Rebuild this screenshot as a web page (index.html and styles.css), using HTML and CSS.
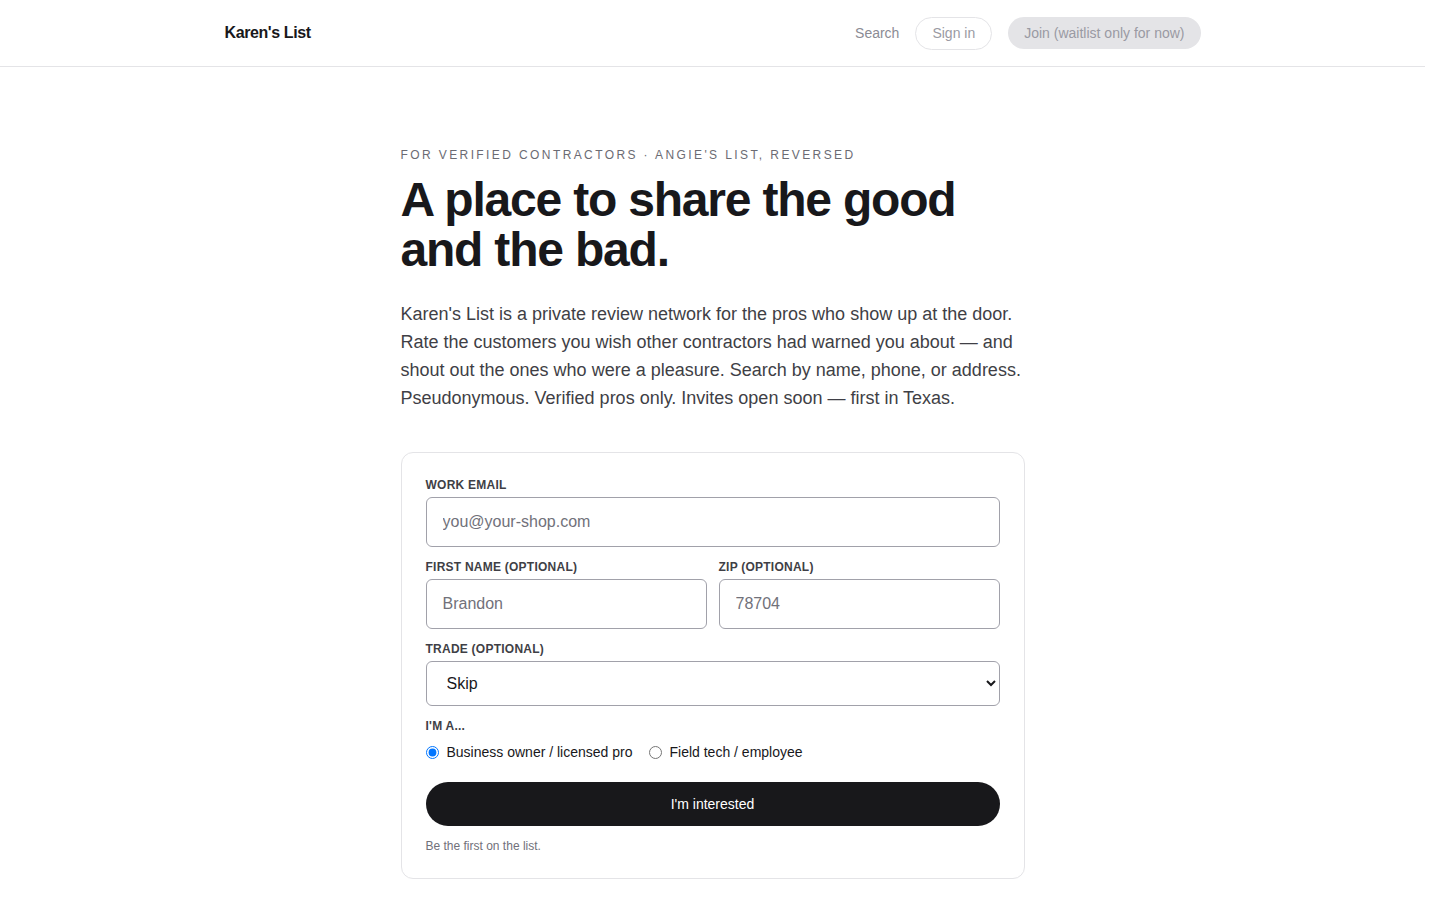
FILE: index.html
```html
<!DOCTYPE html>
<html>
<head>
    <meta name="viewport" content="width=device-width, initial-scale=1.0">
    <title>Karen's List</title>
    <link rel="stylesheet" href="styles.css">
</head>

<body>
    <header class="site-header">
        <div class="header-inner">
            <a class="brand" href="#">Karen's List</a>
            <nav class="nav">
                <a class="nav-link" href="#">Search</a>
                <a class="btn-outline" href="#">Sign in</a>
                <span class="btn-muted">Join (waitlist only for now)</span>
            </nav>
        </div>
    </header>

    <main class="hero">
        <p class="eyebrow">For verified contractors · Angie's List, reversed</p>
        <h1>A place to share the good and the bad.</h1>
        <p class="lede">
            Karen's List is a private review network for the pros who show up at the door.
            Rate the customers you wish other contractors had warned you about — and
            shout out the ones who were a pleasure. Search by name, phone, or address.
            Pseudonymous. Verified pros only. Invites open soon — first in Texas.
        </p>

        <form class="card" onsubmit="return false;">
            <label class="field-label" for="email">Work email</label>
            <input class="field" id="email" type="email" placeholder="you@your-shop.com">

            <div class="row">
                <div class="col">
                    <label class="field-label" for="fname">First name (optional)</label>
                    <input class="field" id="fname" type="text" placeholder="Brandon">
                </div>
                <div class="col">
                    <label class="field-label" for="zip">Zip (optional)</label>
                    <input class="field" id="zip" type="text" placeholder="78704">
                </div>
            </div>

            <label class="field-label" for="trade">Trade (optional)</label>
            <select class="select" id="trade">
                <option>Skip</option>
                <option>Plumbing</option>
                <option>Electrical</option>
                <option>HVAC</option>
                <option>Roofing</option>
            </select>

            <p class="field-label">I'm a...</p>
            <div class="radios">
                <label class="radio"><input type="radio" name="role" checked> Business owner / licensed pro</label>
                <label class="radio"><input type="radio" name="role"> Field tech / employee</label>
            </div>

            <button class="submit" type="submit">I'm interested</button>
            <p class="note">Be the first on the list.</p>
        </form>
    </main>

    <footer class="site-footer">
        <div class="footer-inner">
            <span>© Karen's List</span>
            <span>Built in Austin, TX</span>
        </div>
    </footer>
</body>

</html>
```

FILE: styles.css
```css
html, body {
    margin: 0;
    padding: 0;
    background: #ffffff;
    color: #18181b;
    font-family: "Liberation Sans", Arial, sans-serif;
}

body {
    padding-right: 15px;
}

a {
    text-decoration: none;
}

.site-header {
    border-bottom: 1px solid #e4e4e7;
}

.header-inner {
    max-width: 1024px;
    margin: 0 auto;
    padding: 0 24px;
    height: 66px;
    box-sizing: border-box;
    display: flex;
    align-items: center;
    justify-content: space-between;
}

.brand {
    font-size: 16px;
    font-weight: 700;
    color: #18181b;
    letter-spacing: -0.4px;
}

.nav {
    display: flex;
    align-items: center;
    gap: 16px;
    font-size: 14px;
}

.nav-link {
    color: #8b8b94;
}

.btn-outline {
    color: #9a9aa3;
    border: 1px solid #e4e4e7;
    border-radius: 999px;
    height: 33px;
    padding: 0 16px;
    display: flex;
    align-items: center;
    box-sizing: border-box;
}

.btn-muted {
    color: #9a9aa3;
    background: #e4e4e7;
    border-radius: 999px;
    height: 32px;
    padding: 0 16px;
    display: flex;
    align-items: center;
}

.hero {
    max-width: 624px;
    margin: 0 auto;
    padding: 80px 0 120px;
}

.eyebrow {
    margin: 0;
    font-size: 12px;
    line-height: 16px;
    letter-spacing: 0.2em;
    text-transform: uppercase;
    color: #6b6b73;
}

h1 {
    margin: 12px 0 0;
    font-size: 48px;
    line-height: 50px;
    font-weight: 700;
    letter-spacing: -0.025em;
    color: #18181b;
}

.lede {
    margin: 25px 0 0;
    font-size: 18px;
    line-height: 28px;
    color: #3f3f46;
}

.card {
    margin-top: 40px;
    border: 1px solid #e4e4e7;
    border-radius: 12px;
    padding: 24px;
    display: flex;
    flex-direction: column;
}

.field-label {
    display: block;
    margin: 0 0 4px;
    font-size: 12px;
    line-height: 16px;
    font-weight: 700;
    letter-spacing: 0.02em;
    text-transform: uppercase;
    color: #3f3f46;
}

.field {
    width: 100%;
    box-sizing: border-box;
    height: 50px;
    padding: 0 16px;
    font-family: inherit;
    font-size: 16px;
    color: #18181b;
    border: 1px solid #a1a1aa;
    border-radius: 6px;
    margin-bottom: 12px;
}

.field::placeholder {
    color: #71717a;
}

.row {
    display: flex;
    gap: 12px;
}

.col {
    flex: 1;
}

.select {
    width: 100%;
    height: 45px;
    box-sizing: border-box;
    padding: 0 16px;
    font-family: inherit;
    font-size: 16px;
    color: #18181b;
    background: #ffffff;
    border: 1px solid #a1a1aa;
    border-radius: 6px;
    margin-bottom: 12px;
}

.radios {
    display: flex;
    gap: 16px;
    margin-top: 6px;
    font-size: 14px;
    color: #18181b;
}

.radio {
    display: flex;
    align-items: center;
    gap: 4px;
}

.radio input {
    margin: 0 4px 0 0;
}

.submit {
    margin-top: 22px;
    height: 44px;
    border: 0;
    border-radius: 999px;
    background: #18181b;
    color: #ffffff;
    font-family: inherit;
    font-size: 14px;
    cursor: pointer;
}

.note {
    margin: 12px 0 0;
    font-size: 12px;
    line-height: 16px;
    color: #71717a;
}

.site-footer {
    border-top: 1px solid #e4e4e7;
    margin-top: 200px;
}

.footer-inner {
    max-width: 1024px;
    margin: 0 auto;
    padding: 24px;
    box-sizing: border-box;
    display: flex;
    justify-content: space-between;
    font-size: 12px;
    color: #8b8b94;
}
```
